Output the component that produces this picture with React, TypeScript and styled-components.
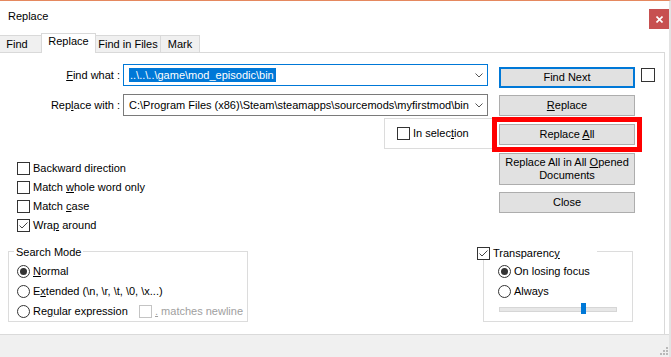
import React from 'react';
import styled, { createGlobalStyle, css } from 'styled-components';

const GlobalStyle = createGlobalStyle`
  html, body { margin: 0; padding: 0; background: #ffffff; }
  body { font-family: "Liberation Sans", Arial, sans-serif; font-size: 11px; color: #000; }
  *, *::before, *::after { box-sizing: border-box; }
`;

const Window = styled.div`
  width: 671px;
  height: 357px;
  display: flex;
  flex-direction: column;
  border-top: 1px solid #e5885f;
  border-right: 2px solid #e3e3e3;
  background: #fff;
  overflow: hidden;
`;

const TitleBar = styled.div`
  height: 32px;
  flex: none;
  display: flex;
  justify-content: space-between;
  align-items: flex-start;
  padding: 8px 0 0 8px;
`;

const Title = styled.span`
  line-height: 14px;
`;

const CloseButton = styled.div`
  width: 20px;
  height: 20px;
  background: #c75050;
  display: flex;
  align-items: center;
  justify-content: center;
`;

const TabStrip = styled.div`
  height: 19px;
  flex: none;
  display: flex;
  align-items: flex-end;
  position: relative;
  z-index: 1;
`;

const Tab = styled.div<{ $active?: boolean; $width: number }>`
  width: ${p => p.$width}px;
  height: ${p => (p.$active ? 20 : 17)}px;
  margin-bottom: ${p => (p.$active ? -1 : 0)}px;
  margin-left: -1px;
  border: 1px solid #d9d9d9;
  border-bottom: none;
  background: ${p => (p.$active ? '#ffffff' : '#f0f0f0')};
  text-align: center;
  line-height: 14px;
  padding-top: ${p => (p.$active ? 0 : 1)}px;
  white-space: nowrap;
  position: relative;
  z-index: ${p => (p.$active ? 2 : 1)};
  &:first-child { margin-left: -8px; }
`;

const Panel = styled.div`
  flex: 1;
  width: 665px;
  border-top: 1px solid #d9d9d9;
  border-right: 1px solid #d9d9d9;
  padding-top: 11px;
  display: flex;
  flex-direction: column;
`;

const TopSection = styled.div`
  display: flex;
  align-items: flex-start;
`;

const LeftCol = styled.div`
  width: 491px;
  flex: none;
  display: flex;
  flex-direction: column;
`;

const FieldRow = styled.div`
  display: grid;
  grid-template-columns: 120px 365px;
  column-gap: 3px;
  align-items: center;
  height: 22px;
  & + & { margin-top: 8px; }
`;

const FieldLabel = styled.label`
  text-align: right;
  line-height: 14px;
  white-space: nowrap;
`;

const Combo = styled.div<{ $focused?: boolean }>`
  height: 22px;
  border: 1px solid ${p => (p.$focused ? '#0078d7' : '#7a7a7a')};
  background: #fff;
  display: flex;
  align-items: center;
  justify-content: space-between;
  padding: 0 4px 0 5px;
`;

const ComboText = styled.span<{ $selected?: boolean }>`
  line-height: 14px;
  white-space: nowrap;
  overflow: hidden;
  ${p =>
    p.$selected &&
    css`
      background: #0078d7;
      color: #fff;
      padding: 0 2px 0 1px;
    `}
`;

const Mn = styled.u`
  text-decoration: underline;
  text-underline-offset: 1px;
`;

const SelectionBox = styled.div`
  margin: 2px 0 0 384px;
  width: 108px;
  height: 31px;
  border: 1px solid #dcdcdc;
  border-right: none;
  padding: 8px 0 0 12px;
`;

const OptionList = styled.div`
  margin: 13px 0 0 17px;
  display: flex;
  flex-direction: column;
  gap: 6px;
`;

const OptionRow = styled.div<{ $width?: number; $muted?: boolean }>`
  display: flex;
  align-items: center;
  gap: 3px;
  height: 13px;
  line-height: 13px;
  white-space: nowrap;
  flex: none;
  color: ${p => (p.$muted ? '#a0a0a0' : '#000')};
  ${p => p.$width && css`width: ${p.$width}px;`}
`;

const InlineOptions = styled.div`
  display: flex;
  align-items: center;
`;

const BoxMark = styled.span<{ $disabled?: boolean }>`
  width: 13px;
  height: 13px;
  flex: none;
  border: 1px solid ${p => (p.$disabled ? '#c4c4c4' : '#333333')};
  background: #fff;
  display: flex;
  align-items: center;
  justify-content: center;
`;

const RadioMark = styled.span<{ $checked?: boolean }>`
  width: 13px;
  height: 13px;
  flex: none;
  border-radius: 50%;
  border: 1px solid #333333;
  background: #fff;
  display: flex;
  align-items: center;
  justify-content: center;
  &::after {
    content: '';
    width: 7px;
    height: 7px;
    border-radius: 50%;
    background: ${p => (p.$checked ? '#333333' : 'transparent')};
  }
`;

const ButtonCol = styled.div`
  display: flex;
  flex-direction: column;
  align-items: flex-start;
  margin-left: 8px;
  padding-top: 3px;
`;

const ButtonRow = styled.div`
  display: flex;
  align-items: flex-start;
  gap: 6px;
`;

const Button = styled.button<{ $default?: boolean; $tall?: boolean; $mt?: number }>`
  appearance: none;
  margin: ${p => p.$mt ?? 0}px 0 0 0;
  width: 136px;
  height: ${p => (p.$tall ? 32 : 21)}px;
  background: #e1e1e1;
  border: ${p => (p.$default ? '2px solid #0078d7' : '1px solid #adadad')};
  border-radius: 0;
  font: inherit;
  color: #000;
  line-height: 13px;
  padding: 0;
  display: flex;
  align-items: center;
  justify-content: center;
  text-align: center;
`;

const SideCheck = styled.span`
  margin-top: 1px;
  width: 14px;
  height: 14px;
  border: 1px solid #333;
  background: #fff;
`;

const Highlighted = styled.div<{ $mt: number }>`
  position: relative;
  margin-top: ${p => p.$mt}px;
  width: 136px;
  &::after {
    content: '';
    position: absolute;
    inset: -7px;
    border: 5px solid #ff0000;
    pointer-events: none;
  }
`;

const BottomSection = styled.div`
  display: flex;
  align-items: flex-start;
  margin-top: 19px;
  padding-left: 8px;
`;

const Group = styled.div<{ $width: number; $ml: number; $pl: number }>`
  position: relative;
  width: ${p => p.$width}px;
  height: 71px;
  margin-left: ${p => p.$ml}px;
  border: 1px solid #dcdcdc;
  padding: 13px 0 0 ${p => p.$pl}px;
  display: flex;
  flex-direction: column;
  gap: 7px;
`;

const GroupCaption = styled.div<{ $left: number; $top: number; $width?: number }>`
  position: absolute;
  top: ${p => p.$top}px;
  left: ${p => p.$left}px;
  padding: 0 2px;
  background: #fff;
  line-height: 13px;
  display: flex;
  align-items: center;
  gap: 3px;
  white-space: nowrap;
  ${p => p.$width && css`width: ${p.$width}px; padding: 0;`}
`;

const SliderTrack = styled.div`
  position: relative;
  width: 118px;
  height: 5px;
  margin: 2px 0 0 1px;
  background: #e7e7e7;
  border: 1px solid #d6d6d6;
`;

const SliderThumb = styled.div`
  position: absolute;
  top: -5px;
  width: 5px;
  height: 11px;
  background: #0078d7;
`;

const Footer = styled.div`
  height: 23px;
  flex: none;
  border-top: 1px solid #dadada;
  background: #f0f0f0;
  display: flex;
  justify-content: flex-end;
  align-items: flex-end;
  padding: 0 0 1px 0;
`;

const CheckGlyph = () => (
  <svg width="11" height="11" viewBox="0 0 11 11">
    <path d="M1.5 5.5 L4 8 L9.5 2.5" fill="none" stroke="#444" strokeWidth="1" />
  </svg>
);

const Chevron = () => (
  <svg width="8" height="5" viewBox="0 0 8 5">
    <path d="M0.5 0.5 L4 4 L7.5 0.5" fill="none" stroke="#555" strokeWidth="1" />
  </svg>
);

const CheckOption: React.FC<{ checked?: boolean; disabled?: boolean; children: React.ReactNode; width?: number }> = ({
  checked,
  disabled,
  children,
  width,
}) => (
  <OptionRow $muted={disabled} $width={width}>
    <BoxMark $disabled={disabled}>{checked && <CheckGlyph />}</BoxMark>
    <span>{children}</span>
  </OptionRow>
);

const RadioOption: React.FC<{ checked?: boolean; children: React.ReactNode; width?: number }> = ({
  checked,
  children,
  width,
}) => (
  <OptionRow $width={width}>
    <RadioMark $checked={checked} />
    <span>{children}</span>
  </OptionRow>
);

const Slider: React.FC<{ value: number }> = ({ value }) => {
  const left = Math.round((value / 100) * (116 - 5));
  return (
    <SliderTrack>
      <SliderThumb style={{ left }} />
    </SliderTrack>
  );
};

const tabs = [
  { label: 'Find', width: 50 },
  { label: 'Replace', width: 55, active: true },
  { label: 'Find in Files', width: 66 },
  { label: 'Mark', width: 40 },
];

export default function App() {
  return (
    <>
      <GlobalStyle />
      <Window>
        <TitleBar>
          <Title>Replace</Title>
          <CloseButton>
            <svg width="7" height="7" viewBox="0 0 7 7">
              <path d="M0.5 0.5 L6.5 6.5 M6.5 0.5 L0.5 6.5" stroke="#fff" strokeWidth="1.6" />
            </svg>
          </CloseButton>
        </TitleBar>
        <TabStrip>
          {tabs.map(t => (
            <Tab key={t.label} $active={t.active} $width={t.width}>
              {t.label}
            </Tab>
          ))}
        </TabStrip>
        <Panel>
          <TopSection>
            <LeftCol>
              <FieldRow>
                <FieldLabel>
                  <Mn>F</Mn>ind what :
                </FieldLabel>
                <Combo $focused>
                  <ComboText $selected>..\..\..\game\mod_episodic\bin</ComboText>
                  <Chevron />
                </Combo>
              </FieldRow>
              <FieldRow>
                <FieldLabel>
                  Rep<Mn>l</Mn>ace with :
                </FieldLabel>
                <Combo>
                  <ComboText>C:\Program Files (x86)\Steam\steamapps\sourcemods\myfirstmod\bin</ComboText>
                  <Chevron />
                </Combo>
              </FieldRow>
              <SelectionBox>
                <CheckOption>
                  In selec<Mn>t</Mn>ion
                </CheckOption>
              </SelectionBox>
              <OptionList>
                <CheckOption>Backward direction</CheckOption>
                <CheckOption>
                  Match <Mn>w</Mn>hole word only
                </CheckOption>
                <CheckOption>
                  Match <Mn>c</Mn>ase
                </CheckOption>
                <CheckOption checked>
                  Wra<Mn>p</Mn> around
                </CheckOption>
              </OptionList>
            </LeftCol>
            <ButtonCol>
              <ButtonRow>
                <Button $default>Find Next</Button>
                <SideCheck />
              </ButtonRow>
              <Button $mt={7}>
                <span>
                  <Mn>R</Mn>eplace
                </span>
              </Button>
              <Highlighted $mt={8}>
                <Button>
                  <span>
                    Replace <Mn>A</Mn>ll
                  </span>
                </Button>
              </Highlighted>
              <Button $mt={8} $tall>
                <span>
                  Replace All in All <Mn>O</Mn>pened
                  <br />
                  Documents
                </span>
              </Button>
              <Button $mt={7}>Close</Button>
            </ButtonCol>
          </TopSection>
          <BottomSection>
            <Group $width={240} $ml={0} $pl={8}>
              <GroupCaption $left={5} $top={-6}>
                Search Mode
              </GroupCaption>
              <RadioOption checked>
                <Mn>N</Mn>ormal
              </RadioOption>
              <RadioOption>
                E<Mn>x</Mn>tended (\n, \r, \t, \0, \x...)
              </RadioOption>
              <InlineOptions>
                <RadioOption width={122}>
                  Re<Mn>g</Mn>ular expression
                </RadioOption>
                <CheckOption disabled>
                  <Mn>.</Mn> matches newline
                </CheckOption>
              </InlineOptions>
            </Group>
            <Group $width={150} $ml={235} $pl={14}>
              <GroupCaption $left={-7} $top={-5} $width={120}>
                <BoxMark>
                  <CheckGlyph />
                </BoxMark>
                <span>
                  Transparenc<Mn>y</Mn>
                </span>
              </GroupCaption>
              <RadioOption checked>On losing focus</RadioOption>
              <RadioOption>Always</RadioOption>
              <Slider value={73} />
            </Group>
          </BottomSection>
        </Panel>
        <Footer>
          <svg width="9" height="9" viewBox="0 0 9 9">
            <g fill="#b9b9b9">
              <rect x="6" y="0" width="2" height="2" />
              <rect x="3" y="3" width="2" height="2" />
              <rect x="6" y="3" width="2" height="2" />
              <rect x="0" y="6" width="2" height="2" />
              <rect x="3" y="6" width="2" height="2" />
              <rect x="6" y="6" width="2" height="2" />
            </g>
          </svg>
        </Footer>
      </Window>
    </>
  );
}
